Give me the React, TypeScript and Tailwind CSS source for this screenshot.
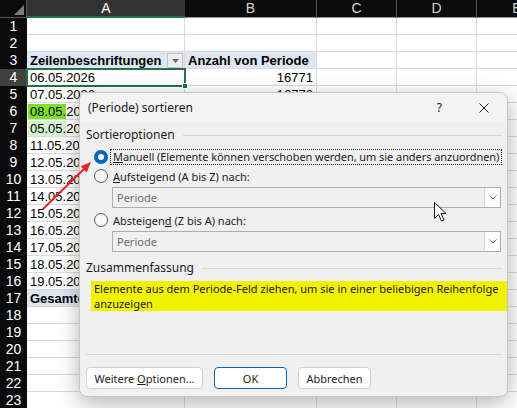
import React from "react";
import clsx from "clsx";

type Row = {
  a?: string;
  b?: string;
  kind?: "head" | "total";
  mark?: "bright" | "soft";
};

const rows: Row[] = [
  {},
  {},
  { a: "Zeilenbeschriftungen", b: "Anzahl von Periode", kind: "head" },
  { a: "06.05.2026", b: "16771" },
  { a: "07.05.2026", b: "16772" },
  { a: "08.05.2026", b: "16773", mark: "bright" },
  { a: "05.05.2026", b: "16770", mark: "soft" },
  { a: "11.05.2026", b: "16776" },
  { a: "12.05.2026", b: "16777" },
  { a: "13.05.2026", b: "16778" },
  { a: "14.05.2026", b: "16779" },
  { a: "15.05.2026", b: "16780" },
  { a: "16.05.2026", b: "16781" },
  { a: "17.05.2026", b: "16782" },
  { a: "18.05.2026", b: "16783" },
  { a: "19.05.2026", b: "16784" },
  { a: "Gesamtergebnis", b: "201946", kind: "total" },
  {},
  {},
  {},
  {},
  {},
  {},
];

function SheetHeader() {
  return (
    <div className="flex h-[18px] bg-[#0b0b0b] text-[14px] leading-[17px]">
      <div className="relative w-[27px] shrink-0 border-r border-b border-[#555]">
        <svg className="absolute right-[2px] bottom-[2px]" width="10" height="10">
          <polygon points="10,0 10,10 0,10" fill="#7c7c7c" />
        </svg>
      </div>
      <div className="w-[158px] shrink-0 border-b-2 border-[#217346] bg-[#333333] text-center text-white">A</div>
      <div className="w-[132px] shrink-0 border-r border-b border-r-[#555] border-b-[#8c8c8c] text-center text-[#d6d6d6]">B</div>
      <div className="w-[80px] shrink-0 border-r border-b border-r-[#555] border-b-[#8c8c8c] text-center text-[#d6d6d6]">C</div>
      <div className="w-[80px] shrink-0 border-r border-b border-r-[#555] border-b-[#8c8c8c] text-center text-[#d6d6d6]">D</div>
      <div className="w-[80px] shrink-0 border-b border-[#8c8c8c] text-center text-[#d6d6d6]">E</div>
    </div>
  );
}

function FilterButton() {
  return (
    <div className="ml-auto mr-[1px] mt-[1px] flex h-[15px] w-[16px] items-center justify-center border border-[#c3c3c3] bg-[#eeeeee]">
      <svg width="7" height="4">
        <polygon points="0,0 7,0 3.5,4" fill="#6b6b6b" />
      </svg>
    </div>
  );
}

function SheetRow({ n, row }: { n: number; row: Row }) {
  const blue = row.kind === "head" || row.kind === "total";
  return (
    <div className="flex h-[17px] leading-[17px]">
      <div
        className={clsx(
          "w-[27px] shrink-0 text-center text-[14px] text-white",
          n === 4 ? "bg-[#404040]" : "bg-[#0b0b0b]"
        )}
      >
        {n}
      </div>
      <div
        className={clsx(
          "flex w-[158px] shrink-0 overflow-hidden whitespace-nowrap border-r border-b border-[#dadada]",
          blue ? "bg-[#dde6f2] font-bold" : "",
          row.mark ? "pl-[1px]" : "pl-[3px]"
        )}
      >
        {row.mark ? (
          <span>
            <span className={clsx("pl-[2px]", row.mark === "bright" ? "bg-[#7fe02a]" : "bg-[#d3f2d0]")}>
              {row.a?.slice(0, 6)}
            </span>
            {row.a?.slice(6)}
          </span>
        ) : (
          <span>{row.a}</span>
        )}
        {row.kind === "head" && <FilterButton />}
      </div>
      <div
        className={clsx(
          "w-[132px] shrink-0 overflow-hidden whitespace-nowrap border-r border-b border-[#dadada]",
          blue ? "bg-[#dde6f2] pl-[3px] font-bold" : "pr-[3px] text-right"
        )}
      >
        {row.b}
      </div>
      <div className="w-[80px] shrink-0 border-r border-b border-[#dadada]" />
      <div className="w-[80px] shrink-0 border-r border-b border-[#dadada]" />
      <div className="w-[80px] shrink-0 border-b border-[#dadada]" />
    </div>
  );
}

function Radio({ checked }: { checked?: boolean }) {
  return checked ? (
    <span className="flex h-[14px] w-[14px] shrink-0 items-center justify-center rounded-full bg-[#0067c0]">
      <span className="h-[6px] w-[6px] rounded-full bg-white" />
    </span>
  ) : (
    <span className="h-[14px] w-[14px] shrink-0 rounded-full border border-[#5c5c5c] bg-[#f7f7f7]" />
  );
}

function Combo() {
  return (
    <div className="ml-[32px] flex h-[21px] w-[389px] items-stretch border border-[#adadad] bg-[#f0f0f0]">
      <span className="flex-1 pl-[4px] leading-[19px] text-[#6f6f6f]">Periode</span>
      <span className="flex w-[16px] items-center justify-center border-l border-[#d4d4d4] bg-[#fcfcfc]">
        <svg width="8" height="5" fill="none" stroke="#707070" strokeWidth="1">
          <polyline points="0.5,0.5 4,4 7.5,0.5" />
        </svg>
      </span>
    </div>
  );
}

function GroupLabel({ children }: { children: React.ReactNode }) {
  return (
    <div className="flex h-[18px] items-center pl-[6px] pr-[5px]">
      <span className="text-[12px] leading-[16px]">{children}</span>
      <span className="ml-[8px] h-[1px] flex-1 bg-[#d6d6d6]" />
    </div>
  );
}

function SortDialog() {
  return (
    <div className="absolute left-[79px] top-[92px] h-[305px] w-[429px] overflow-hidden rounded-[8px] border border-[#c6c6c6] bg-[#f0f0f0] font-['Noto_Sans',sans-serif] text-[11px] leading-[15px] text-[#1b1b1b] shadow-[0_6px_22px_rgba(0,0,0,0.3)]">
      <div className="flex h-[29px] items-center bg-[#f3f3f4] pl-[8px]">
        <span className="text-[12px]">(Periode) sortieren</span>
        <span className="ml-auto mr-[37px] text-[12px]">?</span>
        <svg className="mr-[18px]" width="10" height="10" stroke="#1b1b1b" strokeWidth="1">
          <line x1="0.5" y1="0.5" x2="9.5" y2="9.5" />
          <line x1="9.5" y1="0.5" x2="0.5" y2="9.5" />
        </svg>
      </div>

      <div className="flex flex-col pt-[4px]">
        <GroupLabel>Sortieroptionen</GroupLabel>

        <div className="mt-[4px] flex h-[18px] items-center pl-[14px]">
          <Radio checked />
          <span className="ml-[2px] border border-dotted border-[#222] px-[2px] leading-[14px] tracking-[-0.06px]">
            <u>M</u>anuell (Elemente können verschoben werden, um sie anders anzuordnen)
          </span>
        </div>

        <div className="mt-[1px] flex h-[18px] items-center pl-[14px]">
          <Radio />
          <span className="ml-[5px]">
            <u>A</u>ufsteigend (A bis Z) nach:
          </span>
        </div>
        <div className="mt-[2px]">
          <Combo />
        </div>

        <div className="mt-[3px] flex h-[18px] items-center pl-[14px]">
          <Radio />
          <span className="ml-[5px]">
            Absteigen<u>d</u> (Z bis A) nach:
          </span>
        </div>
        <div className="mt-[2px]">
          <Combo />
        </div>

        <div className="mt-[7px]">
          <GroupLabel>Zusammenfassung</GroupLabel>
        </div>
        <div className="ml-[11px] mt-[4px] h-[30px] w-[416px] bg-[#f2f200] pl-[3px] leading-[15px]">
          Elemente aus dem Periode-Feld ziehen, um sie in einer beliebigen Reihenfolge
          <br />
          anzuzeigen
        </div>

        <div className="ml-[6px] mt-[43px] h-[1px] w-[416px] bg-[#d6d6d6]" />

        <div className="mt-[12px] flex gap-[11px] pl-[6px]">
          <button className="h-[22px] w-[117px] rounded-[4px] border border-[#d0d0d0] bg-white">
            Weitere <u>O</u>ptionen...
          </button>
          <button className="h-[22px] w-[73px] rounded-[4px] border border-[#0067c0] bg-white">OK</button>
          <button className="h-[22px] w-[73px] rounded-[4px] border border-[#d0d0d0] bg-white">Abbrechen</button>
        </div>
      </div>
    </div>
  );
}

export default function App() {
  return (
    <div className="relative h-[408px] w-[517px] overflow-hidden bg-white font-['Liberation_Sans',Arial,sans-serif] text-[13px] text-black">
      <SheetHeader />
      {rows.map((r, i) => (
        <SheetRow key={i} n={i + 1} row={r} />
      ))}

      {/* active cell A4 with fill handle */}
      <div className="absolute left-[26px] top-[68px] h-[19px] w-[160px] border-2 border-[#217346]" />
      <div className="absolute left-[182px] top-[83px] h-[6px] w-[6px] border border-white bg-[#217346]" />

      <SortDialog />

      {/* red pointer to the "Manuell" option */}
      <svg className="pointer-events-none absolute left-[38px] top-[158px]" width="58" height="56">
        <line x1="5" y1="51" x2="47" y2="10" stroke="#e3262b" strokeWidth="2" strokeLinecap="round" />
        <polygon points="53,4 48.7,14.4 42.6,8.2" fill="#e3262b" />
      </svg>

      {/* mouse pointer */}
      <svg className="pointer-events-none absolute left-[434px] top-[202px]" width="14" height="21">
        <polygon
          points="0.5,0.5 0.5,16.5 4.5,12.5 7.5,19 10,18 7,11.5 12,11.5"
          fill="#ffffff"
          stroke="#111111"
          strokeWidth="1"
          strokeLinejoin="round"
        />
      </svg>
    </div>
  );
}
